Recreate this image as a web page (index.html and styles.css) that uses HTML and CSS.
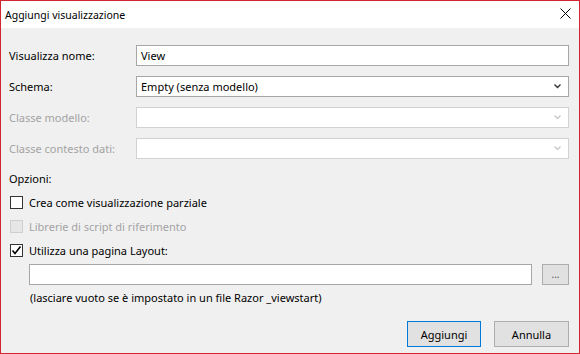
FILE: index.html
```html
<!DOCTYPE html>
<html lang="it">
<head>
  <meta charset="UTF-8">
  <title>Aggiungi visualizzazione</title>
  <link rel="stylesheet" href="styles.css">
</head>
<body>
  <div class="window">
    <div class="titlebar">
      <span class="title">Aggiungi visualizzazione</span>
      <svg class="close" width="11" height="11" viewBox="0 0 11 11">
        <path d="M0.5 0.5 L10.5 10.5 M10.5 0.5 L0.5 10.5" stroke="#000" stroke-width="1" fill="none"/>
      </svg>
    </div>

    <div class="content">
      <div class="form-grid">
        <div class="label">Visualizza nome:</div>
        <div class="field">View</div>

        <div class="label">Schema:</div>
        <div class="field select">
          <span>Empty (senza modello)</span>
          <svg class="chevron" width="7" height="5" viewBox="0 0 7 5"><path d="M0.5 0.5 L3.5 3.5 L6.5 0.5" stroke="#333" stroke-width="1.4" fill="none"/></svg>
        </div>

        <div class="label disabled">Classe modello:</div>
        <div class="field select is-disabled">
          <span></span>
          <svg class="chevron" width="7" height="5" viewBox="0 0 7 5"><path d="M0.5 0.5 L3.5 3.5 L6.5 0.5" stroke="#c4c4c4" stroke-width="1.2" fill="none"/></svg>
        </div>

        <div class="label disabled">Classe contesto dati:</div>
        <div class="field select is-disabled">
          <span></span>
          <svg class="chevron" width="7" height="5" viewBox="0 0 7 5"><path d="M0.5 0.5 L3.5 3.5 L6.5 0.5" stroke="#c4c4c4" stroke-width="1.2" fill="none"/></svg>
        </div>
      </div>

      <div class="options-title">Opzioni:</div>

      <div class="check-row">
        <span class="box"></span>
        <span>Crea come visualizzazione parziale</span>
      </div>
      <div class="check-row disabled">
        <span class="box box-disabled"></span>
        <span>Librerie di script di riferimento</span>
      </div>
      <div class="check-row">
        <span class="box">
          <svg width="11" height="11" viewBox="0 0 11 11"><path d="M1.5 5.5 L4 8.5 L9.5 1.5" stroke="#000" stroke-width="1.6" fill="none"/></svg>
        </span>
        <span>Utilizza una pagina Layout:</span>
      </div>

      <div class="layout-row">
        <div class="field layout-field"></div>
        <div class="btn browse">...</div>
      </div>
      <div class="hint">(lasciare vuoto se è impostato in un file Razor _viewstart)</div>

      <div class="actions">
        <div class="btn btn-default">Aggiungi</div>
        <div class="btn">Annulla</div>
      </div>
    </div>
  </div>
</body>
</html>
```

FILE: styles.css
```css
html, body {
  margin: 0;
  padding: 0;
}
body {
  font-family: "Noto Sans", "Open Sans", sans-serif;
  font-size: 11px;
  color: #000;
  background: #f0f0f0;
}
.window {
  width: 580px;
  height: 354px;
  box-sizing: border-box;
  border: 1px solid #d4262e;
  background: #f0f0f0;
  display: flex;
  flex-direction: column;
}
.titlebar {
  height: 27px;
  background: #fff;
  display: flex;
  align-items: center;
  justify-content: space-between;
  padding: 0 8px 0 4px;
}
.title {
  line-height: 16px;
  font-size: 10.5px;
}
.close {
  display: block;
  margin-top: -2px;
}
.content {
  padding: 17px 10px 0 7px;
  display: flex;
  flex-direction: column;
}
.form-grid {
  display: grid;
  grid-template-columns: 128px 1fr;
  grid-auto-rows: 21px;
  row-gap: 10px;
}
.label {
  display: flex;
  align-items: center;
  padding-left: 1px;
}
.disabled {
  color: #a3a3a3;
}
.field {
  box-sizing: border-box;
  height: 21px;
  background: #fff;
  border: 1px solid #a6a6a6;
  display: flex;
  align-items: center;
  padding-left: 4px;
}
.select {
  justify-content: space-between;
  padding-right: 7px;
}
.is-disabled {
  border-color: #d2d2d2;
}
.chevron {
  display: block;
}
.options-title {
  margin-top: 7px;
  height: 24px;
  display: flex;
  align-items: center;
  padding-left: 1px;
}
.check-row {
  height: 24px;
  display: flex;
  align-items: center;
  gap: 6px;
  padding-left: 2px;
}
.box {
  width: 13px;
  height: 13px;
  box-sizing: border-box;
  border: 1px solid #333;
  background: #fff;
  display: flex;
  align-items: center;
  justify-content: center;
}
.box-disabled {
  border-color: #cfcfcf;
  background: #e6e6e6;
}
.layout-row {
  margin-top: 2px;
  padding-left: 21px;
  display: flex;
  gap: 10px;
}
.layout-field {
  flex: 1;
}
.btn {
  box-sizing: border-box;
  background: #e1e1e1;
  border: 1px solid #adadad;
  display: flex;
  align-items: center;
  justify-content: center;
}
.browse {
  width: 27px;
  height: 21px;
  color: #555;
  font-size: 10px;
  padding-bottom: 2px;
}
.hint {
  height: 24px;
  display: flex;
  align-items: center;
  padding-left: 22px;
}
.actions {
  margin-top: 12px;
  display: flex;
  justify-content: flex-end;
  gap: 13px;
}
.actions .btn {
  width: 74px;
  height: 26px;
}
.actions .btn + .btn {
  width: 75px;
}
.btn-default {
  border-color: #0078d7;
}
```
